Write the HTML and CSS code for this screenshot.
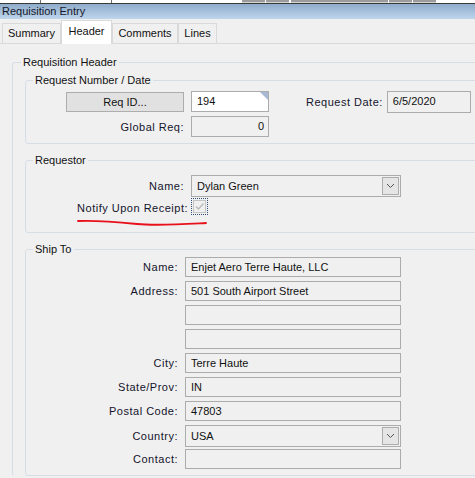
FILE: index.html
```html
<!DOCTYPE html>
<html lang="en">
<head>
    <meta charset="UTF-8">
    <meta name="viewport" content="width=device-width, initial-scale=1.0">
    <title>Requisition Entry</title>
    <link rel="stylesheet" href="styles.css">
</head>
<body>
    <!-- bottom edge of the toolbar above the form -->
    <div class="toolbar-edge">
        <span class="tb-sep first"></span>
        <span class="tb-sep second"></span>
        <span class="tb-btn b1"></span>
        <span class="tb-btn b2"></span>
        <span class="tb-btn wide"></span>
        <span class="tb-btn b2"></span>
        <span class="tb-btn b2"></span>
    </div>

    <div class="title-bar">Requisition Entry</div>

    <div class="tabs">
        <div class="tab summary">Summary</div>
        <div class="tab header active">Header</div>
        <div class="tab comments">Comments</div>
        <div class="tab lines">Lines</div>
    </div>

    <div class="page">
        <fieldset class="group outer">
            <legend>Requisition Header</legend>

            <fieldset class="group inner number-date">
                <legend>Request Number / Date</legend>
                <div class="rows">
                    <div class="row">
                        <div class="lead"><button class="btn">Req ID...</button></div>
                        <div class="box white id-box">194</div>
                        <span class="date-lbl">Request Date:</span>
                        <div class="box date-box">6/5/2020</div>
                    </div>
                    <div class="row">
                        <span class="lead">Global Req:</span>
                        <div class="box num-box">0</div>
                    </div>
                </div>
            </fieldset>

            <fieldset class="group inner requestor">
                <legend>Requestor</legend>
                <div class="row combo-row">
                    <span class="lead">Name:</span>
                    <div class="box combo name-combo">
                        Dylan Green
                        <span class="drop"><svg width="9" height="6" viewBox="0 0 9 6"><path d="M1 1 L4.5 4.5 L8 1" fill="none" stroke="#555" stroke-width="1"/></svg></span>
                    </div>
                </div>
                <div class="row check-row">
                    <span class="lead notify">Notify Upon Receipt:</span>
                    <span class="focus">
                        <span class="check"><svg width="11" height="11" viewBox="0 0 11 11"><path d="M2 5.5 L4.5 8 L9.5 2.5" fill="none" stroke="#b9b9b9" stroke-width="1.3"/></svg></span>
                    </span>
                </div>
                <svg class="scribble" width="140" height="10" viewBox="0 0 140 10"><path d="M1 2 C 20 1, 40 3, 60 5 S 110 5, 129 4" fill="none" stroke="#e8101a" stroke-width="1.8" stroke-linecap="round"/></svg>
            </fieldset>

            <fieldset class="group inner ship-to">
                <legend>Ship To</legend>
                <div class="rows">
                    <div class="row ship"><span class="lead">Name:</span><div class="box wide-box">Enjet Aero Terre Haute, LLC</div></div>
                    <div class="row ship"><span class="lead">Address:</span><div class="box wide-box">501 South Airport Street</div></div>
                    <div class="row ship"><span class="lead"></span><div class="box wide-box"></div></div>
                    <div class="row ship"><span class="lead"></span><div class="box wide-box"></div></div>
                    <div class="row ship"><span class="lead">City:</span><div class="box wide-box">Terre Haute</div></div>
                    <div class="row ship"><span class="lead">State/Prov:</span><div class="box wide-box">IN</div></div>
                    <div class="row ship"><span class="lead">Postal Code:</span><div class="box wide-box">47803</div></div>
                    <div class="row ship country"><span class="lead">Country:</span>
                        <div class="box wide-box combo">
                            USA
                            <span class="drop"><svg width="9" height="6" viewBox="0 0 9 6"><path d="M1 1 L4.5 4.5 L8 1" fill="none" stroke="#555" stroke-width="1"/></svg></span>
                        </div>
                    </div>
                    <div class="row ship"><span class="lead">Contact:</span><div class="box wide-box"></div></div>
                </div>
            </fieldset>
        </fieldset>
    </div>
</body>
</html>
```

FILE: styles.css
```css
html, body {
    margin: 0;
    padding: 0;
    height: 478px;
    overflow: hidden;
}

body {
    background-color: #f0f0f0;
    font-family: "Liberation Sans", Arial, sans-serif;
    font-size: 11px;
    color: #111;
}

/* toolbar leftovers at the very top */
.toolbar-edge {
    height: 3px;
    background-color: #ffffff;
    border-bottom: 1px solid #3a3a3a;
    display: flex;
}
.tb-sep {
    width: 1px;
    height: 3px;
    background-color: #707070;
}
.tb-sep.first { margin-left: 40px; }
.tb-sep.second { margin-left: 70px; }
.tb-btn {
    height: 2px;
    width: 23px;
    background-color: #9c9c9c;
    border-bottom: 1px solid #d4d4d4;
    margin-left: 1px;
}
.tb-btn.b1 { margin-left: 130px; }
.tb-btn.wide { width: 97px; margin-left: 2px; }

/* blue caption */
.title-bar {
    height: 15px;
    line-height: 15px;
    padding-left: 2px;
    background: linear-gradient(#8eacca, #bed5ec);
    color: #16162a;
}

/* tab strip */
.tabs {
    height: 24px;
    display: flex;
    align-items: flex-end;
    padding-left: 2px;
    border-bottom: 1px solid #d9d9d9;
}
.tab {
    height: 20px;
    line-height: 19px;
    box-sizing: border-box;
    border: 1px solid #d9d9d9;
    border-bottom: none;
    text-align: center;
    background-color: #f0f0f0;
}
.tab.summary { width: 59px; }
.tab.header { width: 51px; }
.tab.comments { width: 66px; }
.tab.lines { width: 39px; }
.tab.active {
    height: 24px;
    line-height: 21px;
    margin-bottom: -1px;
    background-color: #ffffff;
    position: relative;
}

/* group boxes */
.group {
    margin: 0;
    min-width: 0;
    border: 1px solid #d5dee6;
    border-radius: 3px;
}
.group legend {
    padding: 0 2px;
    line-height: 14px;
    font-size: 11px;
}
.outer {
    margin: 11px -3px 0 12px;
    padding: 4px 0 0 8px;
    border-bottom: none;
}
.inner {
    margin: 0 0 0 4px;
    padding: 4px 0 6px 7px;
    position: relative;
}
.requestor {
    margin-top: 9px;
    padding: 8px 0 17px 7px;
}
.ship-to {
    margin-top: 9px;
    padding: 1px 0 6px 7px;
}

.rows {
    display: flex;
    flex-direction: column;
    gap: 4px;
}
.row {
    display: flex;
    align-items: center;
    height: 21px;
}
.lead {
    width: 151px;
    flex-shrink: 0;
    text-align: right;
    display: flex;
    justify-content: flex-end;
    letter-spacing: 0.5px;
    color: #14142c;
}

/* text boxes */
.box {
    box-sizing: border-box;
    height: 21px;
    line-height: 19px;
    border: 1px solid #acacac;
    padding-left: 5px;
    margin-left: 7px;
    background-color: #f0f0f0;
    white-space: nowrap;
    position: relative;
}
.box.white { background-color: #ffffff; }
.id-box { width: 78px; }
.id-box::after {
    content: "";
    position: absolute;
    top: 0;
    right: 0;
    border-top: 8px solid #a7b9d3;
    border-left: 8px solid transparent;
}
.date-lbl {
    margin-left: 37px;
    letter-spacing: 0.5px;
    color: #14142c;
}
.date-box {
    width: 84px;
    margin-left: 4px;
    height: 22px;
    margin-top: 1px;
}
.num-box {
    width: 78px;
    text-align: right;
    padding-right: 4px;
}

.btn {
    width: 118px;
    height: 20px;
    margin-top: 1px;
    padding: 0;
    font-family: inherit;
    font-size: 11px;
    letter-spacing: 0;
    color: #111;
    background-color: #e1e1e1;
    border: 1px solid #adadad;
}

/* combo boxes */
.combo-row { height: 22px; }
.combo { height: 22px; line-height: 20px; }
.name-combo { width: 210px; }
.drop {
    position: absolute;
    top: 1px;
    right: 1px;
    width: 17px;
    height: 18px;
    box-sizing: border-box;
    border: 1px solid #adadad;
    background-color: #e5e5e5;
    display: flex;
    align-items: center;
    justify-content: center;
}

/* notify checkbox */
.check-row {
    height: 17px;
    margin-top: 1px;
    align-items: flex-end;
}
.lead.notify {
    width: 155px;
    line-height: 13px;
}
.focus {
    width: 17px;
    height: 17px;
    margin-left: 3px;
    box-sizing: border-box;
    border: 1px dotted #33507a;
    display: flex;
    align-items: center;
    justify-content: center;
}
.check {
    width: 13px;
    height: 13px;
    box-sizing: border-box;
    border: 1px solid #c4c4c4;
    display: flex;
    align-items: center;
    justify-content: center;
}
/* red pen mark under the checkbox label */
.scribble {
    position: absolute;
    left: 51px;
    top: 52px;
}

/* ship to */
.row.ship { height: 20px; }
.ship .lead { width: 145px; }
.wide-box { width: 216px; height: 20px; line-height: 18px; }
.ship.country { height: 22px; margin-bottom: -2px; }
.ship.country .wide-box { height: 22px; line-height: 20px; }
```
